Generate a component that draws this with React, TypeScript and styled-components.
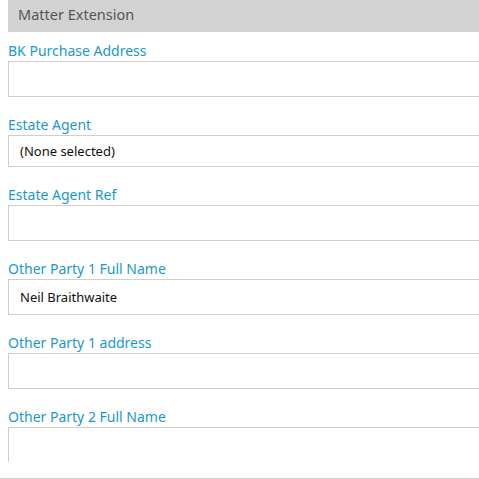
import styled, { createGlobalStyle } from "styled-components";

const GlobalStyle = createGlobalStyle`
  html, body {
    margin: 0;
    padding: 0;
    background: #ffffff;
    overflow: hidden;
  }
  body {
    font-family: "Noto Sans", "Open Sans", sans-serif;
  }
`;

type Field = {
  label: string;
  value?: string;
  kind?: "select" | "text";
};

const FIELDS: Field[] = [
  { label: "BK Purchase Address" },
  { label: "Estate Agent", value: "(None selected)", kind: "select" },
  { label: "Estate Agent Ref" },
  { label: "Other Party 1 Full Name", value: "Neil Braithwaite" },
  { label: "Other Party 1 address" },
  { label: "Other Party 2 Full Name" },
];

export default function App() {
  return (
    <>
      <GlobalStyle />
      <Page>
        <Panel>
          <Header>Matter Extension</Header>
          <Form>
            {FIELDS.map((f) => (
              <FieldRow key={f.label}>
                <Label>{f.label}</Label>
                <Box $select={f.kind === "select"}>{f.value}</Box>
              </FieldRow>
            ))}
          </Form>
        </Panel>
        <Footer />
      </Page>
    </>
  );
}

const Page = styled.div`
  width: 479px;
  height: 479px;
  display: flex;
  flex-direction: column;
  overflow: hidden;
`;

const Panel = styled.section`
  height: 462px;
  overflow: hidden;
  padding-left: 8px;
`;

const Header = styled.div`
  height: 32px;
  width: 520px;
  background: #d3d3d3;
  color: #555555;
  font-size: 14.5px;
  line-height: 29px;
  padding-left: 10px;
  box-sizing: border-box;
`;

const Form = styled.div`
  display: flex;
  flex-direction: column;
  gap: 18px;
  padding-top: 9px;
`;

const FieldRow = styled.div`
  display: flex;
  flex-direction: column;
`;

const Label = styled.label`
  height: 20px;
  line-height: 20px;
  font-size: 14px;
  color: #1b98cf;
`;

const Box = styled.div<{ $select?: boolean }>`
  width: 540px;
  height: ${({ $select }) => ($select ? "32px" : "36px")};
  box-sizing: border-box;
  border: 1px solid #cfcfcf;
  padding-left: 11px;
  display: flex;
  align-items: center;
  font-size: 13px;
  color: #111111;
`;

const Footer = styled.div`
  height: 16px;
  border-bottom: 1px solid #d0d0d0;
`;
